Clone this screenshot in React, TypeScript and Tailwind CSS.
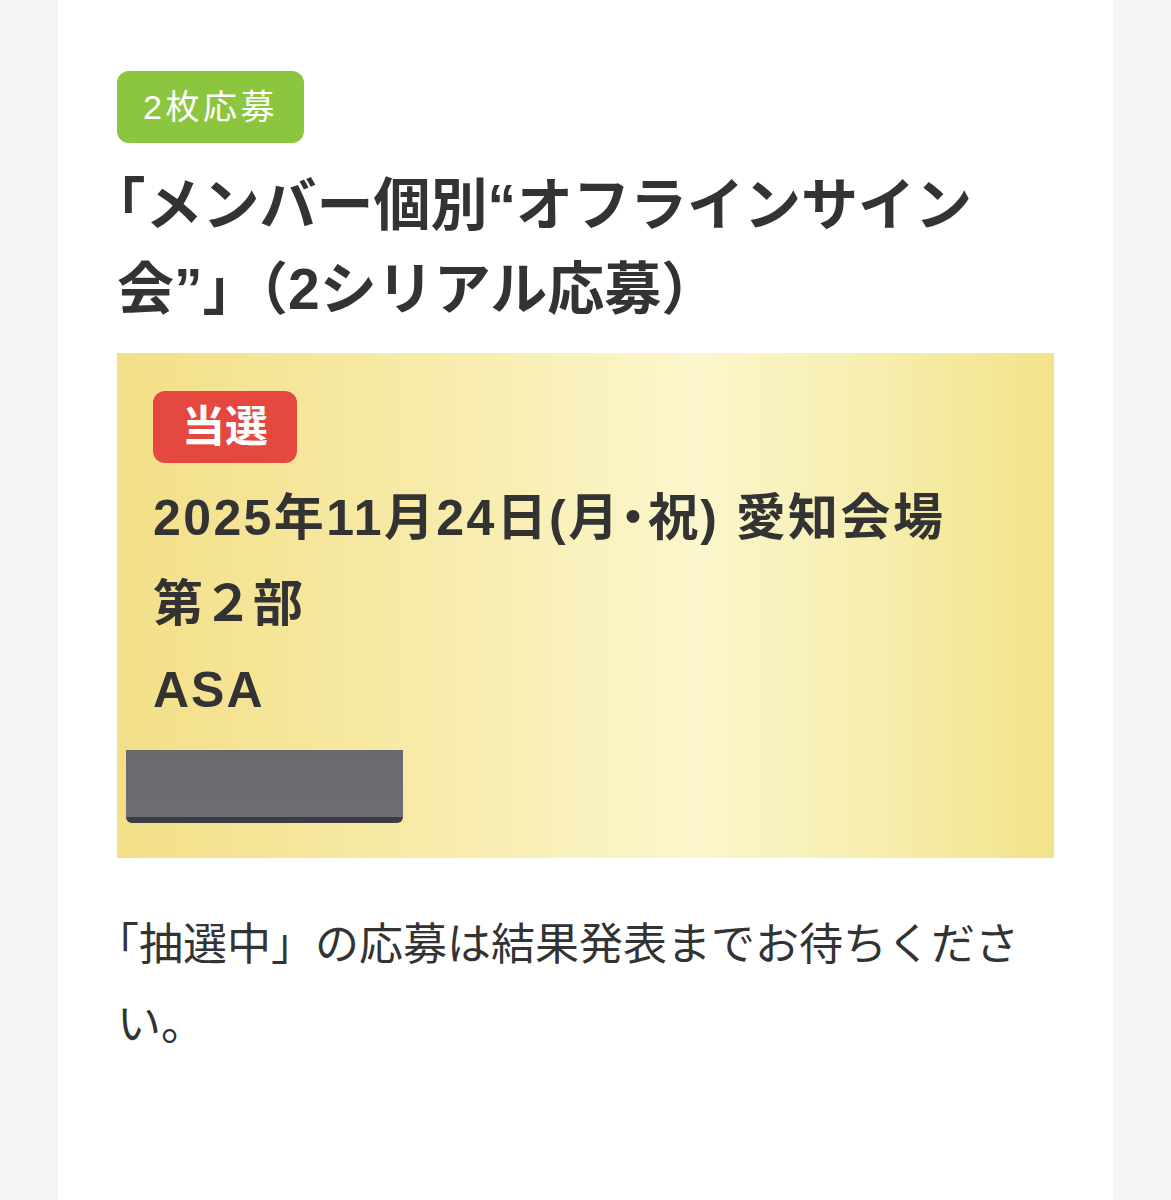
import React from 'react';

const font = "font-['Liberation_Sans','Noto_Sans_CJK_JP',sans-serif]";

export default function App() {
  return (
    <div className={`min-h-screen bg-[#f5f5f5] flex justify-center ${font}`}>
      <div className="w-[1055px] min-h-[1200px] bg-white px-[59px] pt-[71px] text-[#333333]">
        {/* entry type */}
        <div className="flex w-fit h-[72px] items-center rounded-[12px] bg-[#8cc63f] pl-[26px] pr-[26px] text-[34px] tracking-[3.5px] leading-none text-white">
          2枚応募
        </div>

        <h1 className="mt-[20px] text-[57px] font-bold leading-[84px] [text-spacing-trim:trim-start]">
          「メンバー個別“オフラインサイン
          <br />
          会”」<span className="[font-feature-settings:'halt']">（</span>2シリアル応募）
        </h1>

        {/* result card */}
        <div className="mt-[22px] bg-[linear-gradient(90deg,#f2df87_0%,#f7eaa6_30%,#fbf6cc_62%,#f7eeb0_80%,#f2e389_100%)] pl-[36px] pt-[38px] pb-[35px]">
          <div className="flex w-fit h-[72px] items-center rounded-[12px] bg-[#e5483f] px-[29px] text-[43px] font-bold leading-none text-white">
            当選
          </div>
          <div className="mt-[12px] text-[50px] font-bold leading-[86px] tracking-[2.4px]">
            <p>
              2025年11月24日(月<span className="[font-feature-settings:'halt']">・</span>祝) 愛知会場
            </p>
            <p className="tracking-normal">第２部</p>
            <p className="tracking-[2px]">ASA</p>
          </div>
          {/* redaction sticker */}
          <div className="-ml-[27px] mt-[17px] h-[73px] w-[277px] rounded-b-[6px] border-b-[6px] border-b-[#3b3c45] bg-[linear-gradient(180deg,#6a6a6e,#6e6e72)]" />
        </div>

        <p className="mt-[47px] text-[44px] leading-[80px] [text-spacing-trim:trim-start]">
          「抽選中」の応募は結果発表までお待ちください。
        </p>
      </div>
    </div>
  );
}
